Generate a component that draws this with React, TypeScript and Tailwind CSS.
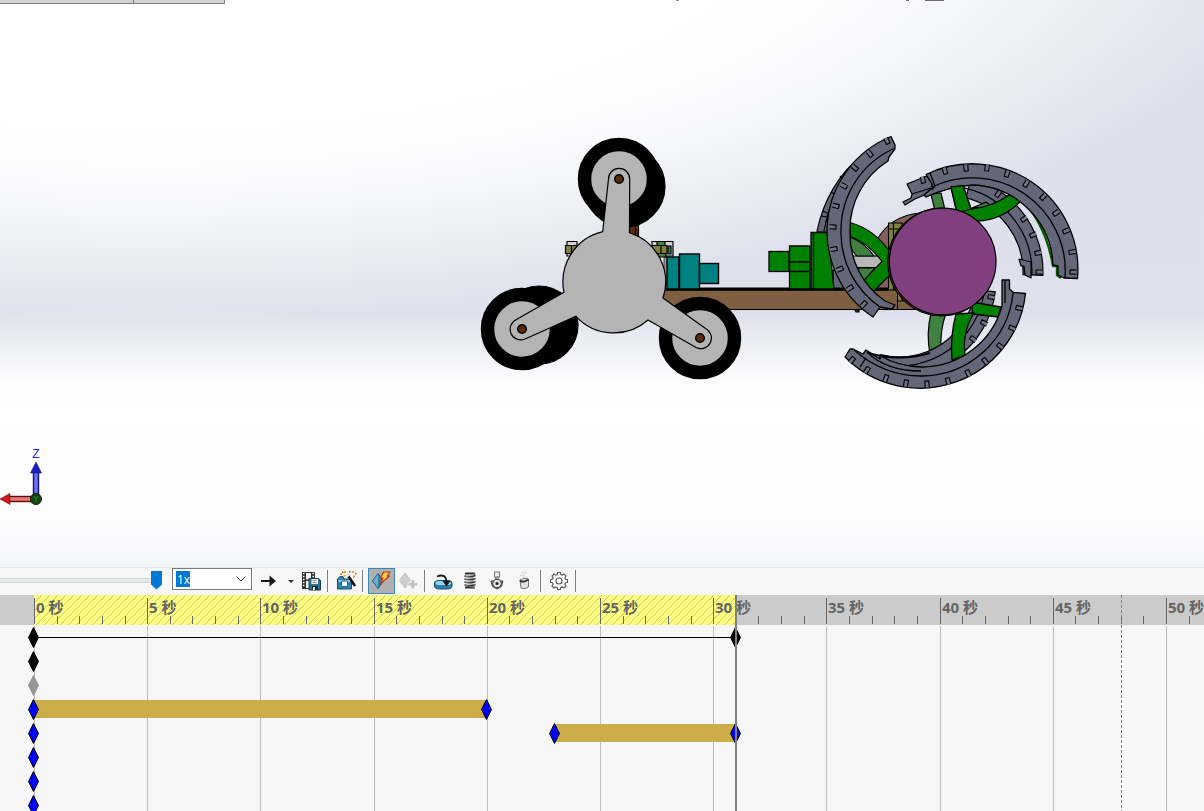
import { useState, type ReactNode } from "react";

const PX_PER_SEC = 22.64;
const ORIGIN = 34;
const DURATION = 31;
const MARKER = 48;
const SECONDS = Array.from({ length: 53 }, (_, i) => i);

const timeX = (sec: number) => Math.round(ORIGIN + sec * PX_PER_SEC);

type KeyColor = "black" | "gray" | "blue";

type Lane = {
  id: string;
  color: KeyColor;
  keys: number[];
  bar?: [number, number];
  line?: [number, number];
};

const LANES: Lane[] = [
  { id: "assembly", color: "black", keys: [0, 31], line: [0, 31] },
  { id: "view", color: "black", keys: [0] },
  { id: "lights", color: "gray", keys: [0] },
  { id: "motor-1", color: "blue", keys: [0, 20], bar: [0, 20] },
  { id: "motor-2", color: "blue", keys: [0, 23, 31], bar: [23, 31] },
  { id: "part-1", color: "blue", keys: [0] },
  { id: "part-2", color: "blue", keys: [0] },
  { id: "part-3", color: "blue", keys: [0] },
];

const KEY_FILL: Record<KeyColor, string> = {
  black: "#000000",
  gray: "#969696",
  blue: "#0000ff",
};

export default function App() {
  return (
    <div className="flex h-screen w-full flex-col overflow-hidden bg-[#f7f7f7] font-['Open_Sans','Noto_Sans_CJK_SC',sans-serif]">
      <Viewport />
      <MotionToolbar />
      <Timeline />
    </div>
  );
}

function Viewport() {
  return (
    <main className="relative min-h-0 flex-1 overflow-hidden bg-[radial-gradient(98%_75%_at_12%_-18%,#ffffff_54%,#ffffffd0_70%,#ffffff60_86%,#ffffff00_100%),linear-gradient(180deg,#dce0eb_0%,#dee1ec_55%,#eeeff5_61%,#fcfcfd_67%,#ffffff_72%,#fefefe_88%,#f6f7fa_100%)]">
      <svg viewBox="0 0 1204 567" className="h-full w-full" role="img" aria-label="Assembly">
        <RearClaws />
        <Chassis />
        <FrontClaws />
        <circle cx="941.5" cy="262" r="54" fill="#4b2a1c" stroke="#000" />
        <circle cx="942.7" cy="261.4" r="53.3" fill="#804080" stroke="#000" strokeWidth="1.2" />
        <TriWheel />
      </svg>

      {/* bottom edge of the docked panels above the view */}
      <div className="absolute inset-x-0 top-0 flex items-start">
        <span className="h-1 w-[134px] border-r border-b border-[#808080] bg-[#d3d3d3]" />
        <span className="h-1 w-[91px] border-r border-b border-[#808080] bg-[#d3d3d3]" />
        <span className="ml-[451px] h-px w-[3px] bg-[#7f9fb8]" />
        <span className="ml-[227px] h-px w-[3px] bg-[#707070]" />
        <span className="ml-4 h-px w-[19px] bg-[#6e6a70]" />
      </div>

      <Triad />
    </main>
  );
}

function Triad() {
  return (
    <svg viewBox="0 447 48 64" className="absolute bottom-14 left-0 h-16 w-12">
      <text x="36" y="458" fontSize="12" textAnchor="middle" fill="#1a1aff" fontFamily="Liberation Sans, sans-serif">
        Z
      </text>
      <rect x="33.5" y="472" width="5" height="23" fill="#7070f0" stroke="#10107a" strokeWidth="1.4" />
      <path d="M36 462 L41.5 473 H30.5Z" fill="#1c1cc8" stroke="#10107a" strokeWidth=".6" />
      <rect x="9" y="496.500" width="23" height="5" fill="#f07878" stroke="#5c0c0c" strokeWidth="1.4" />
      <path d="M0 499 L10 493.500 V504.500Z" fill="#d01818" stroke="#6a0c0c" strokeWidth=".6" />
      <circle cx="36" cy="499" r="5.5" fill="#134413" stroke="#0a2a0a" />
      <path d="M34 496 L36 499 L38 496 M36 499 V503" stroke="#1e8a1e" fill="none" />
    </svg>
  );
}

type Pt = [number, number];

function polar(cx: number, cy: number, r: number, deg: number): string {
  const a = (deg * Math.PI) / 180;
  return `${(cx + r * Math.cos(a)).toFixed(1)} ${(cy + r * Math.sin(a)).toFixed(1)}`;
}

/** Ring segment between two radii, angles clockwise from the x axis. */
function band(cx: number, cy: number, outer: number, inner: number, from: number, to: number) {
  const large = to - from > 180 ? 1 : 0;
  return (
    `M${polar(cx, cy, outer, from)} A${outer} ${outer} 0 ${large} 1 ${polar(cx, cy, outer, to)} ` +
    `L${polar(cx, cy, inner, to)} A${inner} ${inner} 0 ${large} 0 ${polar(cx, cy, inner, from)}Z`
  );
}

function arc(cx: number, cy: number, r: number, from: number, to: number) {
  return `M${polar(cx, cy, r, from)} A${r} ${r} 0 0 1 ${polar(cx, cy, r, to)}`;
}

/** Tread slots, each turned towards the centre of its claw. */
function Treads({ cx, cy, at }: { cx: number; cy: number; at: Pt[] }) {
  return (
    <g fill="#6f7283" stroke="#000" strokeWidth="1.1">
      {at.map(([x, y]) => {
        const deg = (Math.atan2(y - cy, x - cx) * 180) / Math.PI;
        return (
          <path
            key={`${x}-${y}`}
            d="M3.500 -2 H-3 V2 H3.500"
            transform={`translate(${x} ${y}) rotate(${deg.toFixed(1)})`}
          />
        );
      })}
    </g>
  );
}

function RearClaws() {
  return (
    <g fill="#646778" stroke="#000" strokeWidth="1.2" strokeLinejoin="round">
      {/* left */}
      <path d="M862 155 Q827 184 817 231 L818 232 H846 V200Z" />
      <path d="M857 160 Q832 189 824 231 M840 176 l4 4 M831 192 l5 3 M822 211 l6 2 l-1 4 l-6 -1" fill="none" />
      <path d="M833 270 H845 L850 289 H833Z" />

      {/* upper right */}
      <path d="M931 194 L941 193 L945 210 L935 211Z" fill="#408040" />
      <path d={band(946, 272, 97, 77, -75, 2)} />
      <path d={arc(946, 272, 86, -82, 2)} fill="none" />
      <path d="M907 184 L927 176 L936 190 L915 199 L905 205 L903 202 L911 198 L912 194Z" />
      <path d="M912 194 L931 188" fill="none" />
      <path d="M1019 259 L1021 266 L1024 266 L1025 275 L1031 278 V262Z" />
      <path d="M972 208 Q982 204 986 202 L992 207Z" fill="#408040" />
      <Treads
        cx={946}
        cy={272}
        at={[[923, 180], [998, 194], [1024, 219], [1033, 235], [1038, 253], [1039, 272]]}
      />

      {/* lower */}
      <path d="M931 313 Q926 334 930 354 L941 349 Q940 330 946 313Z" fill="#408040" />
      <path d={band(899, 280, 97, 77, 7, 104)} />
      <path d={arc(899, 280, 86, 8, 100)} fill="none" />
      <Treads cx={899} cy={280} at={[[991, 297], [984, 323], [973, 339]]} />
    </g>
  );
}

function Chassis() {
  return (
    <g stroke="#000" strokeWidth="1.1">
      <path d="M877 240 Q890 216 920 213 V309 H876 V262Z" fill="#85605f" />
      <path d="M888.500 223 H902 V309 H888.500Z M893.500 223 V309 M888.500 229 H905" fill="#80803f" />
      <rect x="663" y="290" width="234.500" height="19.500" fill="#7f5f42" />
      <path d="M897.500 301 H917 V309.500 H897.500Z" fill="#7f5f42" />
      <path d="M666 289 H889" strokeWidth="3" />
      <path d="M855 310 h4 v2 h-3z" fill="#444" />

      {/* drive motor, teal */}
      <g fill="#008080" strokeWidth="1.4">
        <path d="M664 257 H668 V289 H664Z" fill="#9a9a9a" strokeWidth=".6" />
        <rect x="667" y="257" width="12" height="32" />
        <rect x="679.500" y="254" width="20" height="35" />
        <rect x="699.500" y="263.500" width="19" height="20" />
      </g>

      {/* drive motor, green */}
      <g fill="#008000" strokeWidth="1.3">
        <rect x="769" y="251.500" width="20" height="20" />
        <path d="M789.500 246 H810 V289 H789.500Z M789.500 262 H810 M789.500 271.500 H810" />
        <path d="M811 232.500 H828 L834 289 H811Z M813.500 233 V289 M811 256 V270" />
      </g>

      <path d="M852 256 H878 L883 261.500 L878 267.500 H852Z" fill="#b8b8b8" />
      <path d="M850 237 Q865 243 874 256 H857 Q851 250 850 244Z" fill="#408040" />
      <path d="M856 268 H875 L864 281Z" fill="#408040" />
      <path d="M850 222.500 Q874 229 890 252 V275 L874 291 L863 281 L882 261.500 Q869 244 850 236Z" fill="#008000" />
    </g>
  );
}

function FrontClaws() {
  return (
    <g fill="#646778" stroke="#000" strokeWidth="1.3" strokeLinejoin="round">
      {/* left */}
      <path d="M891 136.500 A102.500 102.500 0 0 0 873 317 L880 307 L892 309 L895 305 L885 301 A81 81 0 0 1 850 232 A81 81 0 0 1 888 161 L889 157 L895 149 L895 145Z" />
      <path d="M895 148 A90 90 0 0 0 841 232 A90 90 0 0 0 880 307" fill="none" />
      <Treads
        cx={931}
        cy={232}
        at={[
          [887, 141], [870, 154], [855, 168], [844, 186], [836, 206],
          [833, 227], [834, 249], [840, 269], [850, 288], [864, 304],
        ]}
      />

      {/* upper right */}
      <path d="M1022 200 Q1046 225 1053 266 L1057 266 V275 L1061 278" stroke="#006000" strokeWidth="2.4" fill="none" />
      <path d="M951 187 L963 185 L971 209 Q992 207 1009 195 L1022 200 Q1002 220 978 221 L957 213Z" fill="#008000" />
      <path d="M926 174.500 A105.500 105.500 0 0 1 1077.500 278.500 L1064 278 L1058 275 V266 L1053 265 A83 83 0 0 0 972 185 Q948 187 926 197 L924 195 L932 188 L932 184Z" />
      <path d="M932 187 A93 93 0 0 1 1065 278 M930 173 L935 186 L932 190" fill="none" />
      <Treads
        cx={974}
        cy={268}
        at={[
          [945, 171], [966, 168], [987, 168], [1007, 174], [1026, 184],
          [1043, 197], [1056, 213], [1066, 231], [1072, 252], [1073, 272],
        ]}
      />
      <path d="M951 187 L963 185.500 L971 209 L957 213Z" fill="#008000" />

      {/* lower */}
      <path d="M971 302 L1001 307 L998 317 L973 314Z" fill="#008000" />
      <path d="M845 357 A106 106 0 0 0 1025.500 293.500 L1013.500 292.500 L1009.500 289 V280 H1002 V306 A83 83 0 0 1 921 367 Q897 366 881 356 L880 359 L866 350 L863 354 L853 349 L850 349Z" />
      <path d="M854 350 Q884 376 921 376 A92 92 0 0 0 1013 293 M867 352 Q886 371 921 371 M866 358 L860 367 M1005 281 V303" fill="none" />
      <path d="M956 314 Q950 336 952 360 L965 355 Q962 332 974 313Z" fill="#008000" />
      <path d="M868 353 Q900 362 930 353" strokeWidth="2" fill="none" />
      <Treads
        cx={921}
        cy={284}
        at={[
          [1019, 308], [1012, 328], [1000, 346], [985, 361], [968, 373], [948, 381],
          [927, 384], [906, 383], [886, 378], [867, 370], [852, 360],
        ]}
      />
    </g>
  );
}

const WHEELS: Pt[] = [
  [619, 179],
  [522, 329],
  [700, 338],
];

function TriWheel() {
  return (
    <g stroke="#000" strokeWidth="1.2">
      <path d="M629 216 H638.500 V240 H629Z M635.500 216 V240" fill="#5c2b05" />
      <path d="M567 241.500 H577 V256 H567Z M652 241.500 H673 V256 H652Z" fill="#d0d2d4" />
      <path d="M657 241.500 h8 v4 h-8z M658 253 h8 v4 h-8z M668 246 h3 v8 h-3z" fill="#408040" />
      <path d="M565.500 245.500 H580 V253.500 H565.500Z M571.500 245.500 V253.500 M652 245.500 H667 V253.500 H652Z M661 245.500 V253.500" fill="#80803f" />

      <circle cx="624.500" cy="186.500" r="40.500" fill="#000" />
      <circle cx="539" cy="325" r="39" fill="#000" />
      {WHEELS.map(([x, y]) => (
        <circle key={x} cx={x} cy={y} r="34.500" fill="#b4b4b4" strokeWidth="13.500" />
      ))}

      <path
        d="M602.700 231.700 L608.500 179 A10.600 10.600 0 0 1 629.700 179 L629.500 232.700
          A51.500 51.500 0 0 1 663 298 L705.500 328.500 A10.600 10.600 0 0 1 696 347.500
          L648 320 A51.500 51.500 0 0 1 576 316.300 L525 339 A10.600 10.600 0 0 1 516.500 319.500
          L564 292.300 A51.500 51.500 0 0 1 602.700 231.700Z"
        fill="#b4b4b4"
      />
      {WHEELS.map(([x, y]) => (
        <circle key={x} cx={x} cy={y} r="4.300" fill="#5c2b05" strokeWidth="1.500" />
      ))}
    </g>
  );
}

function MotionToolbar() {
  const [position, setPosition] = useState(100);
  const [autokey, setAutokey] = useState(true);

  return (
    <div className="flex h-7 shrink-0 items-start border-t border-[#e4e4ef] bg-[#f7f7f7]">
      <input
        type="range"
        aria-label="Time"
        value={position}
        onChange={(e) => setPosition(Number(e.target.value))}
        className="h-6 w-[162px] appearance-none bg-transparent [&::-webkit-slider-runnable-track]:h-[5px] [&::-webkit-slider-runnable-track]:border-y [&::-webkit-slider-runnable-track]:border-[#d2d6d6] [&::-webkit-slider-runnable-track]:bg-[#e7eaea] [&::-webkit-slider-thumb]:-mt-2 [&::-webkit-slider-thumb]:h-[19px] [&::-webkit-slider-thumb]:w-[11px] [&::-webkit-slider-thumb]:appearance-none [&::-webkit-slider-thumb]:bg-[#0078d7] [&::-webkit-slider-thumb]:[clip-path:polygon(0_0,100%_0,100%_74%,50%_100%,0_74%)]"
      />
      <div className="relative ml-2.5">
        <select
          aria-label="Playback speed"
          defaultValue="1x"
          className="block h-[22px] w-20 appearance-none border border-[#7a7a7a] bg-white bg-[linear-gradient(#0078d7,#0078d7)] bg-[length:14px_16px] bg-[position:3px_2px] bg-no-repeat pt-px pl-1 text-[12px] leading-5 text-white"
        >
          <option>1x</option>
          <option>2x</option>
          <option>5x</option>
        </select>
        <svg viewBox="0 0 10 6" className="pointer-events-none absolute top-2 right-1.5 h-1.5 w-2.5" fill="none" stroke="#444">
          <path d="M.5 .5 L5 5 L9.500 .5" />
        </svg>
      </div>

      <ToolButton label="Playback mode" className="ml-1">
        <path d="M1 9 H9.500 V4.500 L16 10 L9.500 15.500 V11 H1Z" fill="#1a1a1a" />
      </ToolButton>
      <button type="button" aria-label="Playback mode options" className="flex h-[26px] w-[15px] items-center justify-center">
        <svg viewBox="0 0 6 3" className="h-[3px] w-1.5">
          <path d="M0 0 H6 L3 3Z" fill="#333" />
        </svg>
      </button>

      <ToolButton label="Save animation">
        <path d="M0 1 H13 V18 H0Z" fill="#2e2e2e" />
        <path d="M4 2 H9 V8.500 H4Z M4 10 H9 V17 H4Z" fill="#f4f4f4" />
        <path d="M1 2.500 h1.500 M1 5.500 h1.500 M1 8.500 h1.500 M1 11.500 h1.500 M1 14.500 h1.500 M10.500 2.500 h1.500 M10.500 5.500 h1.500" stroke="#fff" strokeWidth="1.500" />
        <path d="M7 7.500 H16.500 L18.500 9.500 V19 H7Z" fill="#2f6f94" stroke="#173a50" />
        <path d="M9.500 8 H16 V13 H9.500Z" fill="#f2f2f2" />
        <path d="M10.500 9.500 h4 M10.500 11.500 h4" stroke="#888" />
        <path d="M10 15 H16 V19 H10Z" fill="#1d2b35" />
        <path d="M11 16 h2 v3 h-2z" fill="#e0e0e0" />
      </ToolButton>
      <Separator />

      <ToolButton label="Animation wizard">
        <path d="M.5 8 L3 5.500 H6 L7 8 H14.500 V18 H.5Z" fill="#2e86b0" stroke="#174e6b" />
        <path d="M1.500 9 H13.500 V11 H1.500Z" fill="#8ccbe6" />
        <rect x="4.500" y="10" width="6" height="5.500" rx="1" fill="#eef8fc" stroke="#1d5c7c" />
        <path d="M10.500 4 L18 15" stroke="#111" strokeWidth="2.600" />
        <path d="M10 3.500 L11.500 5.500" stroke="#eee" strokeWidth="2.400" />
        <path d="M3 2 h2 v2 h-2z M7 0 h2 v2 h-2z M15 0 h2 v2 h-2z M6.500 4 h2 v1.500 h-2z M16 4.500 h2 v2 h-2z" fill="#f0a020" />
        <path d="M5 .5 h1.500 v1.500 h-1.500z M12 0 h1.500 v1.500 h-1.500z M18 2 h1.500 v1.500 h-1.500z" fill="#d03a10" />
      </ToolButton>
      <Separator />

      <ToolButton label="Autokey" pressed={autokey} onClick={() => setAutokey(!autokey)}>
        <path d="M6 2.500 L11.500 10 L6 17.500 L.5 10Z" fill="#2f82b2" stroke="#1c587d" />
        <path d="M6 3 V17 L1 10Z" fill="#68b0d4" />
        <path d="M11.500 1 H18 L15 5 H17.500 L8 13 L11 7 H8.500Z" fill="#ffd24a" stroke="#c0390c" strokeWidth="1.200" strokeLinejoin="round" />
      </ToolButton>
      <ToolButton label="Add key" disabled>
        <path d="M6 2 L11.500 9.500 L6 17 L.5 9.500Z" fill="#cfcfcf" stroke="#c2c2c2" />
        <path d="M12 8.500 h3.500 v3 h3 v3.500 h-3 v3 h-3.500 v-3 h-3 v-3.500 h3z" fill="#c4c4c4" stroke="#f7f7f7" strokeWidth=".8" />
      </ToolButton>
      <Separator />

      <ToolButton label="Motor">
        <path d="M.5 12 Q.5 9.500 4.500 9.500 H14 Q18 9.500 18 12 V15 Q18 18 13 18 H5.500 Q.5 18 .5 15Z" fill="#2b7fa8" stroke="#174e6b" />
        <path d="M1.500 12 Q1.500 10 5.500 10 H13 Q17 10 17 12 Q17 14 13 14 H5.500 Q1.500 14 1.500 12Z" fill="#9bd4ec" />
        <path d="M3 5.500 Q12 2 12.500 11" fill="none" stroke="#1a1a1a" strokeWidth="1.800" />
        <path d="M8.500 10 H16.500 L12.500 15.500Z" fill="#1a1a1a" />
      </ToolButton>
      <ToolButton label="Spring">
        <path
          d="M4 2.500 H14 M3.500 5 Q9 6.500 14.500 4.500 M3.500 8 Q9 9.500 14.500 7.500 M3.500 11 Q9 12.500 14.500 10.500 M3.500 14 Q9 15.500 14.500 13.500 M4 16.500 H14"
          fill="none"
          stroke="#333"
          strokeWidth="1.800"
        />
        <path d="M14 2.500 L14.500 4.500 M3.500 5 L14.500 7.500 M3.500 8 L14.500 10.500 M3.500 11 L14.500 13.500 M3.500 14 L14 16.500" fill="none" stroke="#8a8a8a" strokeWidth=".8" />
      </ToolButton>
      <ToolButton label="Contact">
        <rect x="6.500" y="1" width="5" height="5" fill="#ededed" stroke="#777" />
        <path d="M7.500 6 h3 v3 h-3z" fill="#bbb" stroke="#666" strokeWidth=".7" />
        <path d="M3 10 H15 L13.500 15.500 L9 18 L4.500 15.500Z" fill="#9a9a9a" stroke="#444" />
        <circle cx="9" cy="12.500" r="4.300" fill="#dedede" stroke="#333" />
        <circle cx="9" cy="12.500" r="1.500" fill="#222" />
      </ToolButton>
      <ToolButton label="Gravity">
        <path d="M6 1.500 h6 M5 4.500 h5 M8 6.500 h5" stroke="#dedede" strokeWidth="1.600" />
        <path d="M5 9 Q9 6 13.500 8 V16 Q10 19 6 17Z" fill="#e2e2e2" stroke="#777" />
        <path d="M5 9.500 Q8 12.500 13.500 8.500" fill="none" stroke="#333" strokeWidth="1.800" />
      </ToolButton>
      <Separator />

      <ToolButton label="Motion study properties">
        <path
          d="M7.600 1.500 h2.800 l.4 2 1.500 .6 1.700 -1.100 2 2 -1.100 1.700 .6 1.500 2 .4 v2.800 l-2 .4 -.6 1.500 1.100 1.700 -2 2 -1.700 -1.100 -1.500 .6 -.4 2 h-2.800 l-.4 -2 -1.500 -.6 -1.700 1.100 -2 -2 1.100 -1.700 -.6 -1.500 -2 -.4 v-2.800 l2 -.4 .6 -1.500 -1.100 -1.700 2 -2 1.700 1.100 1.500 -.6z"
          fill="#fafafa"
          stroke="#555"
          strokeWidth="1.100"
        />
        <circle cx="9" cy="10" r="3" fill="none" stroke="#555" strokeWidth="1.100" />
      </ToolButton>
      <Separator />
    </div>
  );
}

function ToolButton({
  label,
  pressed,
  disabled,
  onClick,
  className = "",
  children,
}: {
  label: string;
  pressed?: boolean;
  disabled?: boolean;
  onClick?: () => void;
  className?: string;
  children: ReactNode;
}) {
  return (
    <button
      type="button"
      aria-label={label}
      aria-pressed={pressed}
      disabled={disabled}
      onClick={onClick}
      className={`flex h-[26px] w-[27px] items-center justify-center border ${
        pressed ? "border-[#3a8ab8] bg-[#b0b0b0]" : "border-transparent"
      } ${className}`}
    >
      <svg viewBox="0 0 20 20" className="h-5 w-5 shrink-0">
        {children}
      </svg>
    </button>
  );
}

function Separator() {
  return <span className="mt-0.5 mr-[5px] ml-0.5 h-[22px] w-px bg-[#808080]" />;
}

function Timeline() {
  return (
    <section className="relative shrink-0 overflow-hidden" aria-label="Timeline">
      <Ruler />
      <div className="relative h-[186px] overflow-hidden">
        {SECONDS.filter((s) => s % 5 === 0).map((s) => (
          <span key={s} className="absolute top-px bottom-0 w-px bg-[#bdbdbd]" style={{ left: timeX(s) }} />
        ))}
        {LANES.map((lane) => (
          <LaneRow key={lane.id} lane={lane} />
        ))}
      </div>

      {/* end of study, then the playhead */}
      <span className="absolute inset-y-0 w-px bg-[repeating-linear-gradient(180deg,#808080_0_3px,transparent_3px_5px)]" style={{ left: timeX(MARKER) }} />
      <span className="absolute inset-y-0 w-0.5 bg-[#808080]" style={{ left: timeX(DURATION) - 1 }} />
    </section>
  );
}

function Ruler() {
  return (
    <div className="relative h-[30px] overflow-hidden bg-[#cbcbcb]">
      <span
        className="absolute inset-y-0 bg-[#ffff80] bg-[linear-gradient(135deg,transparent_45%,#c6c66c_45%,#c6c66c_55%,transparent_55%)] bg-[length:8px_8px]"
        style={{ left: ORIGIN, width: timeX(DURATION) - ORIGIN }}
      />
      {SECONDS.map((s) =>
        s % 5 === 0 ? (
          <span
            key={s}
            className="absolute top-[3px] bottom-px border-l border-[#666666] pl-px text-[15px] leading-[19px] font-bold whitespace-nowrap text-[#646464]"
            style={{ left: timeX(s) }}
          >
            {s} 秒
          </span>
        ) : (
          <span key={s} className="absolute bottom-px h-2 w-px bg-[#666666]" style={{ left: timeX(s) }} />
        ),
      )}
    </div>
  );
}

function LaneRow({ lane }: { lane: Lane }) {
  return (
    <div className="relative h-6">
      {lane.line && (
        <span
          className="absolute top-3 h-px bg-black"
          style={{ left: timeX(lane.line[0]), width: timeX(lane.line[1]) - timeX(lane.line[0]) }}
        />
      )}
      {lane.bar && (
        <span
          className="absolute inset-y-[3px] bg-[#cdac4a]"
          style={{ left: timeX(lane.bar[0]), width: timeX(lane.bar[1]) - timeX(lane.bar[0]) }}
        />
      )}
      {lane.keys.map((k) => (
        <svg
          key={k}
          viewBox="0 0 11 21"
          className="absolute top-0.5 h-[21px] w-[11px]"
          style={{ left: timeX(k) - 6 }}
        >
          <path
            d="M5.500 .5 L10.500 10.500 L5.500 20.500 L.5 10.500Z"
            fill={KEY_FILL[lane.color]}
            stroke={lane.color === "gray" ? "#969696" : "#000000"}
          />
        </svg>
      ))}
    </div>
  );
}
